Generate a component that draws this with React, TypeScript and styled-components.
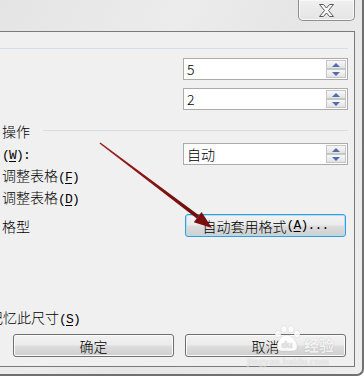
import React from "react";
import styled, { createGlobalStyle } from "styled-components";

const Global = createGlobalStyle`
  html, body { margin: 0; padding: 0; background: #ffffff; overflow: hidden; }
  body { font-family: "Noto Sans CJK SC", "Liberation Sans", sans-serif; }
`;

const Window = styled.div`
  position: relative;
  box-sizing: border-box;
  width: 364px;
  height: 376px;
  border-right: 2px solid #707070;
  border-bottom: 2px solid #707070;
  border-bottom-right-radius: 7px;
  background: linear-gradient(115deg, #e4e4e4 0%, #ececec 35%, #e6e6e6 55%, #eeeeee 100%);
  display: flex;
  flex-direction: column;
  overflow: hidden;
`;

const TitleBar = styled.div`
  height: 31px;
  flex: 0 0 31px;
  display: flex;
  justify-content: flex-end;
  align-items: flex-start;
  padding-right: 7px;
`;

const CloseButton = styled.div`
  box-sizing: border-box;
  width: 57px;
  height: 21px;
  border: 1px solid #8e8e8e;
  border-top: none;
  border-radius: 0 0 5px 5px;
  background: linear-gradient(#f0f0f0, #e4e4e4);
  box-shadow: inset 0 0 0 1px #f8f8f8;
  display: flex;
  align-items: center;
  justify-content: center;
`;

const Frame = styled.div`
  flex: 1;
  padding: 0 7px 7px 0;
  display: flex;
`;

const Client = styled.div`
  box-sizing: border-box;
  flex: 1;
  height: 336px;
  border-top: 1px solid #7a7a7a;
  border-right: 1px solid #7a7a7a;
  border-bottom: 1px solid #7a7a7a;
  background: #f0f0f0;
  display: flex;
  flex-direction: column;
  font-size: 14px;
  font-weight: 300;
  color: #000;
  padding-right: 6px;
`;

const Rule = styled.div<{ $top: number }>`
  margin-top: ${(p) => p.$top}px;
  height: 1px;
  background: #d5dfe8;
`;

const Row = styled.div<{ $top?: number; $h?: number }>`
  margin-top: ${(p) => p.$top ?? 0}px;
  height: ${(p) => p.$h ?? 22}px;
  display: flex;
  align-items: center;
  justify-content: space-between;
`;

const Label = styled.span<{ $shift?: number }>`
  padding-left: 2px;
  margin-left: ${(p) => p.$shift ?? 0}px;
  white-space: nowrap;
  line-height: 16px;
`;

const Latin = styled.span`
  font-family: "Liberation Mono", "DejaVu Sans Mono", monospace;
  font-size: 13px;
  letter-spacing: -0.8px;
  font-weight: 400;
  & u { text-decoration-thickness: 1px; text-underline-offset: 2px; }
`;

const HeaderLine = styled.div`
  flex: 0 0 305px;
  height: 1px;
  background: #d5dfe8;
`;

const SpinBox = styled.div`
  box-sizing: border-box;
  width: 165px;
  height: 22px;
  margin-left: auto;
  border: 1px solid #ababab;
  background: #ffffff;
  display: flex;
  padding: 1px;
`;

const SpinValue = styled.span`
  flex: 1;
  padding-left: 2px;
  line-height: 18px;
  font-size: 14px;
`;

const SpinButtons = styled.div`
  width: 20px;
  display: flex;
  flex-direction: column;
`;

const SpinButton = styled.div`
  flex: 1;
  box-sizing: border-box;
  border: 1px solid #c6c6c6;
  background: linear-gradient(#f8f8f8, #e2e2e2);
  display: flex;
  align-items: center;
  justify-content: center;
`;

const Tri = styled.span<{ $down?: boolean }>`
  width: 0;
  height: 0;
  border-left: 4.5px solid transparent;
  border-right: 4.5px solid transparent;
  ${(p) =>
    p.$down
      ? "border-top: 4px solid #4f6cb4;"
      : "border-bottom: 4px solid #4f6cb4;"}
`;

const PushButton = styled.div<{ $focus?: boolean }>`
  box-sizing: border-box;
  width: 161px;
  height: 23px;
  border: 1px solid ${(p) => (p.$focus ? "#3c9ad6" : "#707070")};
  border-radius: 3px;
  background: linear-gradient(#f2f2f2 0%, #ebebeb 48%, #dddddd 52%, #cfcfcf 100%);
  box-shadow: inset 0 0 0 1px ${(p) => (p.$focus ? "#a8e0f8" : "#fbfbfb")};
  display: flex;
  align-items: center;
  justify-content: center;
  font-size: 14px;
  line-height: 16px;
  white-space: nowrap;
`;

const ButtonRow = styled.div<{ $top: number }>`
  margin-top: ${(p) => p.$top}px;
  display: flex;
  justify-content: flex-end;
  gap: 11px;
  padding-right: 2px;
`;

const ArrowLayer = styled.svg`
  position: absolute;
  left: 0;
  top: 0;
  width: 364px;
  height: 378px;
  pointer-events: none;
`;

const Watermark = styled.div`
  position: absolute;
  left: 247px;
  top: 325px;
  width: 92px;
  display: flex;
  flex-direction: column;
  pointer-events: none;
  color: rgba(255, 255, 255, 0.85);
  text-shadow: 0 0 1px rgba(0, 0, 0, 0.25);
`;

const WmLogo = styled.div`
  display: flex;
  align-items: flex-end;
  gap: 3px;
  margin-left: 26px;
  font-size: 15px;
  line-height: 16px;
  font-weight: bold;
`;

const WmUrl = styled.div`
  font-family: "Liberation Serif", serif;
  font-size: 11px;
  line-height: 10px;
  margin-top: 3px;
  color: rgba(255, 255, 255, 0.7);
`;

function Spin({ value }: { value: string }) {
  return (
    <SpinBox>
      <SpinValue>{value}</SpinValue>
      <SpinButtons>
        <SpinButton>
          <Tri />
        </SpinButton>
        <SpinButton>
          <Tri $down />
        </SpinButton>
      </SpinButtons>
    </SpinBox>
  );
}

export default function App() {
  return (
    <>
      <Global />
      <Window>
        <TitleBar>
          <CloseButton>
            <svg width="17" height="15" viewBox="0 0 17 15">
              <polygon
                points="1.5,1.5 5.5,1.5 8.5,5 11.5,1.5 15.5,1.5 10.5,7.5 15.5,13.5 11.5,13.5 8.5,10 5.5,13.5 1.5,13.5 6.5,7.5"
                fill="#f6f6f6"
                stroke="#5a5a5a"
                strokeWidth="1"
                strokeLinejoin="round"
              />
            </svg>
          </CloseButton>
        </TitleBar>
        <Frame>
          <Client>
            <Rule $top={16} />
            <Row $top={9}>
              <Spin value="5" />
            </Row>
            <Row $top={8}>
              <Spin value="2" />
            </Row>
            <Row $top={10} $h={21}>
              <Label>操作</Label>
              <HeaderLine />
            </Row>
            <Row $top={2}>
              <Label>
                <Latin>
                  (<u>W</u>):
                </Latin>
              </Label>
              <Spin value="自动" />
            </Row>
            <Row>
              <Label>
                调整表格
                <Latin>
                  (<u>F</u>)
                </Latin>
              </Label>
            </Row>
            <Row>
              <Label>
                调整表格
                <Latin>
                  (<u>D</u>)
                </Latin>
              </Label>
            </Row>
            <Row $top={5} $h={23}>
              <Label>格型</Label>
              <PushButton $focus style={{ marginRight: 2 }}>
                自动套用格式
                <Latin>
                  (<u>A</u>)...
                </Latin>
              </PushButton>
            </Row>
            <Row $top={70}>
              <Label $shift={-13}>
                记忆此尺寸
                <Latin>
                  (<u>S</u>)
                </Latin>
              </Label>
            </Row>
            <ButtonRow $top={5}>
              <PushButton>确定</PushButton>
              <PushButton>取消</PushButton>
            </ButtonRow>
          </Client>
        </Frame>
        <Watermark>
          <WmLogo>
            <svg width="28" height="28" viewBox="0 0 28 28">
              <g fill="rgba(255,255,255,0.85)" stroke="rgba(0,0,0,0.12)" strokeWidth="0.6">
                <ellipse cx="5" cy="9" rx="3" ry="3.6" />
                <ellipse cx="11" cy="4" rx="3" ry="3.6" />
                <ellipse cx="18" cy="4" rx="3" ry="3.6" />
                <ellipse cx="24" cy="9" rx="3" ry="3.6" />
                <path d="M14 10 C8 10 3 18 4 23 C5 27 10 26 14 26 C18 26 23 27 24 23 C25 18 20 10 14 10 Z" />
              </g>
              <text x="14" y="23" textAnchor="middle" fontSize="9" fontWeight="bold" fill="#e3e3e3" fontFamily="Liberation Sans, sans-serif">
                du
              </text>
            </svg>
            <span>经验</span>
          </WmLogo>
          <WmUrl>jingyan.baidu.com</WmUrl>
        </Watermark>
        <ArrowLayer viewBox="0 0 364 378">
          <defs>
            <linearGradient id="ar" x1="0" y1="0" x2="1" y2="1">
              <stop offset="0" stopColor="#9a2020" />
              <stop offset="1" stopColor="#6e0c0c" />
            </linearGradient>
          </defs>
          <polygon
            points="99.5,143.6 100.4,142.4 199.2,215.4 196.8,218.6"
            fill="url(#ar)"
          />
          <polygon points="212,228 193.8,222.3 201.6,211.9" fill="#7a0e0e" />
        </ArrowLayer>
      </Window>
    </>
  );
}
